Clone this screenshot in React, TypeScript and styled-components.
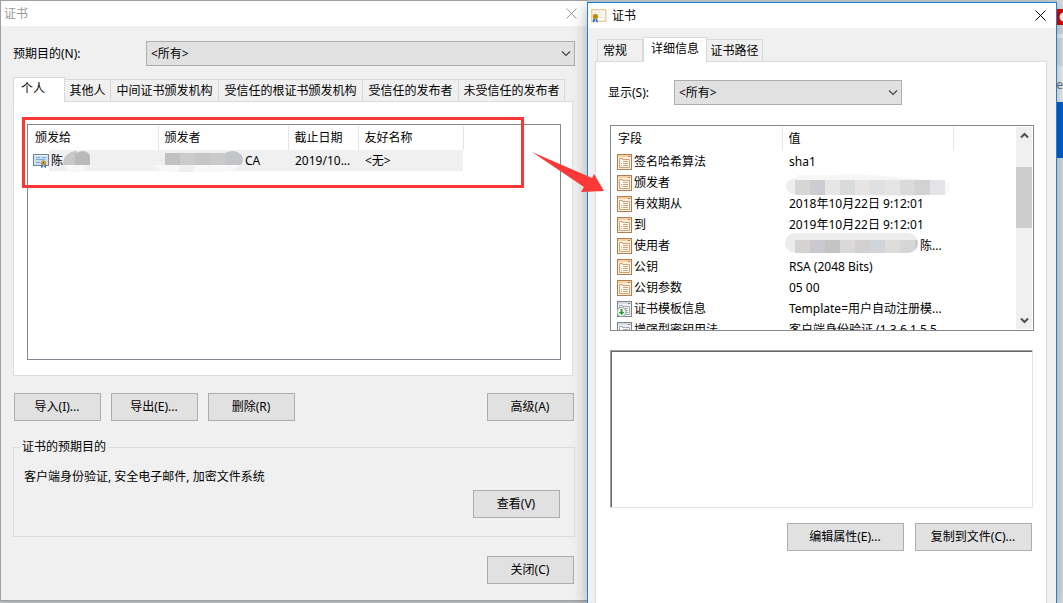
import React from "react";
import styled, { createGlobalStyle, css } from "styled-components";

const Global = createGlobalStyle`
  *, *::before, *::after { box-sizing: border-box; }
  body { margin: 0; background: #c9cbcc; }
  body, button, select, textarea { font: 12px/16px "Noto Sans", "Noto Sans CJK SC", sans-serif; color: #000; }
  svg { display: block; flex: none; }
`;

const Desktop = styled.div`
  display: grid;
  grid-template-columns: minmax(0, 587fr) minmax(0, 470fr) 6px;
  min-height: 100vh;
  overflow: hidden;
`;

const Win = styled.section<{ $active?: boolean }>`
  display: flex;
  flex-direction: column;
  background: #f0f0f0;
  ${(p) =>
    p.$active
      ? css`
          z-index: 1;
          margin-top: 2px;
          border: 1px solid #1883d7;
          border-bottom: 0;
          box-shadow: 0 4px 14px rgba(0, 0, 0, 0.3);
        `
      : css`
          position: relative;
          margin-bottom: 2px;
          border: 1px solid #a0a0a0;
          border-right: 0;
          box-shadow: 0 0 6px rgba(0, 0, 0, 0.3);
        `}
`;

const TitleBar = styled.header<{ $active?: boolean }>`
  display: flex;
  align-items: center;
  gap: 5px;
  height: 25px;
  padding: 0 10px 0 3px;
  background: #fff;
  color: ${(p) => (p.$active ? "#000" : "#999")};
`;

const Title = styled.h1`
  flex: 1;
  margin: 0;
  font-size: 12px;
  font-weight: 400;
`;

const CloseButton = styled.button`
  display: flex;
  padding: 0;
  border: 0;
  background: none;
  color: inherit;
`;

const Field = styled.div<{ $inset?: boolean }>`
  display: grid;
  grid-template-columns: ${(p) => (p.$inset ? "66px minmax(0, 228px)" : "133px minmax(0, 1fr)")};
  align-items: center;
`;

const SelectBox = styled.div`
  position: relative;
  display: flex;
`;

const Select = styled.select`
  appearance: none;
  width: 100%;
  height: 25px;
  padding: 0 24px 0 4px;
  border: 1px solid #adadad;
  border-radius: 0;
  background: #e1e1e1;
`;

const SelectArrow = styled.svg`
  position: absolute;
  right: 4px;
  top: 10px;
  pointer-events: none;
`;

const Tabs = styled.div`
  display: flex;
  align-items: flex-end;
`;

const Tab = styled.button<{ $on?: boolean; $first?: boolean; $w: number }>`
  width: ${(p) => p.$w}px;
  height: ${(p) => (p.$on ? 25 : 22)}px;
  padding: 0;
  border: 1px solid #d9d9d9;
  border-bottom: 0;
  border-left-width: ${(p) => (p.$first ? 1 : 0)}px;
  background: #f0f0f0;
  white-space: nowrap;
  ${(p) =>
    p.$on &&
    css`
      z-index: 1;
      margin-bottom: -1px;
      padding-bottom: 3px;
      border-left-width: 1px;
      background: #fff;
    `}
  ${(p) =>
    p.$first &&
    css`
      padding-left: ${p.$on ? 7 : 5}px;
      text-align: left;
    `}
`;

const Panel = styled.div`
  background: #fff;
  border: 1px solid #dcdcdc;
`;

const Button = styled.button<{ $wide?: boolean }>`
  width: ${(p) => (p.$wide ? 117 : 87)}px;
  height: 28px;
  padding: 0 1px 0 0;
  border: 1px solid #adadad;
  background: #e1e1e1;
`;

const ListFrame = styled.div`
  display: flex;
  background: #fff;
  border: 1px solid #828790;
  padding: 1px;
  overflow: hidden;
`;

const Table = styled.table`
  table-layout: fixed;
  border-collapse: collapse;
  flex: 1;
  align-self: flex-start;
  width: 100%;
  th, td { padding: 0 0 0 6px; text-align: left; font-weight: 400; white-space: nowrap; }
  td:first-child { padding-left: 5px; }
  thead th { height: 24px; border-right: 1px solid #e5e5e5; }
  thead th:last-child { border-right: 0; }
  td { height: 21px; }
`;

/* ---- personal certificates window ---- */

const StoreBody = styled.div`
  flex: 1;
  display: flex;
  flex-direction: column;
  padding: 15px 12px 16px;
`;

const StoreTabs = styled.div`
  margin-top: 11px;
`;

const StorePanel = styled(Panel)`
  position: relative;
  margin-right: 2px;
  padding: 22px 11px 15px 13px;
`;

const StoreList = styled(ListFrame)`
  height: 236px;
`;

const StoreTable = styled(Table)`
  td:not(:first-child):not(:last-child) { background: #f0f0f0; }
  td:nth-child(3), td:nth-child(4) { padding-left: 7px; }
`;

const IssuedTo = styled.div`
  display: flex;
  align-items: center;
  margin-left: -1px;
`;

const CertName = styled.span`
  flex: 1;
  display: flex;
  align-items: center;
  height: 21px;
  padding-left: 2px;
  background: #f0f0f0;
`;

const Highlight = styled.div`
  position: absolute;
  left: 8px;
  right: 48px;
  top: 15px;
  height: 71px;
  border: 3px solid #fb3838;
  pointer-events: none;
`;

const Arrow = styled.svg`
  position: absolute;
  z-index: 2;
  left: 100%;
  top: 150px;
  margin-left: -58px;
  pointer-events: none;
`;

const ActionRow = styled.div`
  display: flex;
  gap: 10px;
  margin: 17px 1px 0;
`;

const Spacer = styled.span`
  flex: 1;
`;

const Purposes = styled.fieldset`
  display: flex;
  flex-direction: column;
  min-width: 0;
  margin: 18px 0 19px;
  height: 98px;
  padding: 14px 14px 18px 10px;
  border: 1px solid #dcdcdc;
  legend { margin-left: -4px; padding: 0 2px; height: 16px; }
  p { margin: 0; }
`;

const PushRight = styled.div`
  display: flex;
  justify-content: flex-end;
  margin-top: 5px;
`;

const CloseRow = styled.div`
  display: flex;
  justify-content: flex-end;
  margin-right: 1px;
`;

/* ---- certificate details window ---- */

const DetailBody = styled.div`
  flex: 1;
  display: flex;
  flex-direction: column;
  padding: 9px 9px 0 7px;
`;

const DetailTabs = styled.div`
  padding-left: 2px;
`;

const DetailPanel = styled(Panel)`
  flex: 1;
  padding: 18px 12px 0 14px;
  border-bottom: 0;
`;

const FieldInset = styled.div`
  margin-left: -2px;
`;

const DetailList = styled(ListFrame)`
  height: 206px;
  margin-top: 20px;
`;

const DetailTable = styled(Table)`
  td:nth-child(2) { padding-left: 7px; }
`;

const FieldName = styled.div`
  display: flex;
  align-items: center;
  gap: 2px;
`;

const ScrollBar = styled.div`
  display: flex;
  flex: none;
  flex-direction: column;
  align-items: center;
  width: 16px;
  background: #f0f0f0;
`;

const ScrollButton = styled.button`
  display: flex;
  justify-content: center;
  align-items: center;
  width: 16px;
  height: 17px;
  padding: 0;
  border: 0;
  background: none;
`;

const ScrollTrack = styled.div`
  flex: 1;
  width: 100%;
  padding-top: 23px;
`;

const Thumb = styled.div`
  height: 61px;
  background: #cdcdcd;
`;

const ValueBox = styled.textarea`
  display: block;
  width: calc(100% - 1px);
  height: 158px;
  margin-top: 19px;
  resize: none;
  border: 1px solid #e3e3e3;
  border-top-color: #a0a0a0;
  border-left-color: #a0a0a0;
  border-radius: 0;
  box-shadow: inset 1px 1px #696969;
  outline: 0;
`;

const DetailActions = styled.div`
  display: flex;
  justify-content: flex-end;
  gap: 11px;
  margin: 15px 2px 0 0;
`;

const Masked = styled.div`
  display: flex;
  align-items: center;
  height: 21px;
`;

const MaskSvg = styled.svg`
  overflow: visible;
`;

/* ---- sliver of the browser behind ---- */

const Behind = styled.aside`
  display: flex;
  flex-direction: column;
  overflow: hidden;
  background: #dcdfe0;
`;

const Band = styled.div<{ $h: number; $c: string }>`
  flex: none;
  height: ${(p) => p.$h}px;
  padding-top: 2px;
  background: ${(p) => p.$c};
`;

const PageText = styled(Band)`
  display: flex;
  justify-content: flex-end;
  padding-top: 0;
  color: #6f7478;
`;

function CloseGlyph() {
  return (
    <svg width="11" height="11" viewBox="0 0 11 11" aria-hidden="true">
      <path d="M.5.5l10 10M10.5.5l-10 10" stroke="currentColor" fill="none" />
    </svg>
  );
}

function Combo({ id }: { id: string }) {
  return (
    <SelectBox>
      <Select id={id}>
        <option>&lt;所有&gt;</option>
      </Select>
      <SelectArrow width="10" height="6" viewBox="0 0 10 6" aria-hidden="true">
        <path d="M1 .5l4 4 4-4" stroke="#444" strokeWidth="1.2" fill="none" />
      </SelectArrow>
    </SelectBox>
  );
}

function TabStrip({ items, active }: { items: [string, number][]; active: number }) {
  return (
    <Tabs role="tablist">
      {items.map(([label, w], i) => (
        <Tab key={label} role="tab" aria-selected={i === active} $on={i === active} $first={i === 0} $w={w}>
          {label}
        </Tab>
      ))}
    </Tabs>
  );
}

function CertRowIcon() {
  return (
    <svg width="16" height="14" viewBox="0 0 16 14" aria-hidden="true">
      <rect x=".5" y=".5" width="15" height="11" fill="#c9e0f8" stroke="#6f8596" />
      <path d="M1.500 1.500h13" stroke="#eaf4fd" />
      <path d="M3 3.500h4M9 3.500h4M3 5.500h9M3 8.500h4" stroke="#7fa8dc" />
      <path d="M8 10.500v3.500l2-1V10zM13 10.500v3.500l-2-1V10z" fill="#2f74dc" />
      <circle cx="10.500" cy="9" r="2.700" fill="#c2a050" />
      <circle cx="10.500" cy="9" r="1" fill="#8a6a1c" />
    </svg>
  );
}

function TitleIcon() {
  return (
    <svg width="16" height="14" viewBox="0 0 16 14" aria-hidden="true">
      <rect x=".75" y=".75" width="14" height="11.500" fill="#fffdf8" stroke="#e8cfa4" strokeWidth="1.500" />
      <path d="M3 3.500h3M7 3.500h5M8 5.500h5M8 8.500h5" stroke="#e2e6ea" />
      <path d="M2.500 9l-1 4.500 2.200-.8L4.500 9zM6 9l1 4.500-2-.8L4.500 9z" fill="#2f6fe0" />
      <circle cx="4.500" cy="7.500" r="2.800" fill="#cc9a1a" />
      <circle cx="4.500" cy="7.500" r="1.200" fill="#a87c10" />
    </svg>
  );
}

function FieldIcon({ ext, critical }: { ext?: boolean; critical?: boolean }) {
  const edge = ext ? "#7d868e" : "#b07d55";
  const soft = ext ? "#eef1f4" : "#feeeda";
  const line = ext ? "#a3abb3" : "#cda279";
  return (
    <svg width="15" height="16" viewBox="0 0 15 16" aria-hidden="true">
      <rect x=".5" y=".5" width="14" height="15" fill={soft} stroke={edge} />
      <path d="M1 2h13" stroke={ext ? "#d5dbe0" : "#f9cf9d"} strokeWidth="2" />
      <path d="M11 2.500h2" stroke={edge} />
      <path d="M2.500 13.500v-9h3v1h7v8z" fill="#fffaf3" stroke={line} />
      <path d="M6 7.500h5M4 9.500h1M6 9.500h5M4 11.500h1M6 11.500h5" stroke={line} />
      {critical && (
        <>
          <circle cx="4.500" cy="11" r="4.500" fill="#fff" stroke="#8c939a" />
          <path d="M3.500 8h2v3H7.500l-3 3-3-3h2z" fill="#27a022" />
        </>
      )}
    </svg>
  );
}

function Blocks({ colors, y, h }: { colors: string[]; y: number; h: number }) {
  return (
    <>
      {colors.map((c, i) => (
        <rect key={i} x={6 + i * 15} y={y} width="15" height={h} fill={c} />
      ))}
    </>
  );
}

const fields: { name: string; value: React.ReactNode; ext?: boolean; critical?: boolean }[] = [
  { name: "签名哈希算法", value: "sha1" },
  {
    name: "颁发者",
    value: (
      <Masked>
        <MaskSvg width="160" height="21" viewBox="0 0 160 21" aria-hidden="true">
          <path d="M8 3h30l30-1 40 3 30 3v12l-10 5H80l-30-3H8z" fill="#f6f6f5" />
          <path d="M8 6v17q-11-2-11-9t11-8z" fill="#eeeeed" />
          <Blocks
            y={8}
            h={15}
            colors={["#d6d6d6", "#cdcdd1", "#e6e6e6", "#d9dada", "#e6e5e4", "#dfe0e2", "#e6e5e4", "#d9dadc", "#d3d2d1", "#e4e4e8"]}
          />
          <path d="M156 9q5 2 5 6t-5 7z" fill="#f8f8f8" />
        </MaskSvg>
      </Masked>
    ),
  },
  { name: "有效期从", value: "2018年10月22日 9:12:01" },
  { name: "到", value: "2019年10月22日 9:12:01" },
  {
    name: "使用者",
    value: (
      <Masked>
        <MaskSvg width="131" height="21" viewBox="0 0 131 21" aria-hidden="true">
          <clipPath id="owner-mask">
            <rect x="-4" y="-2" width="133" height="20" rx="10" />
          </clipPath>
          <g clipPath="url(#owner-mask)">
            <rect x="-4" y="-2" width="133" height="20" fill="#ececed" />
            <Blocks
              y={5}
              h={13}
              colors={["#d4d3d2", "#cbc9cf", "#c4c4c4", "#dad9d7", "#d2d0d1", "#d1d5da", "#dedddb", "#d6d6d6", "#c9c9cb"]}
            />
          </g>
        </MaskSvg>
        陈...
      </Masked>
    ),
  },
  { name: "公钥", value: "RSA (2048 Bits)" },
  { name: "公钥参数", value: "05 00" },
  { name: "证书模板信息", value: "Template=用户自动注册模...", ext: true, critical: true },
  { name: "增强型密钥用法", value: "客户端身份验证 (1.3.6.1.5.5....", ext: true },
];

export default function App() {
  return (
    <>
      <Global />
      <Desktop>
        <Win>
          <TitleBar>
            <Title>证书</Title>
            <CloseButton aria-label="关闭">
              <CloseGlyph />
            </CloseButton>
          </TitleBar>
          <StoreBody>
            <Field>
              <label htmlFor="purpose">预期目的(N):</label>
              <Combo id="purpose" />
            </Field>
            <StoreTabs>
              <TabStrip
                active={0}
                items={[
                  ["个人", 52],
                  ["其他人", 46],
                  ["中间证书颁发机构", 108],
                  ["受信任的根证书颁发机构", 144],
                  ["受信任的发布者", 96],
                  ["未受信任的发布者", 106],
                ]}
              />
            </StoreTabs>
            <StorePanel>
              <StoreList>
                <StoreTable>
                  <colgroup>
                    <col style={{ width: 129 }} />
                    <col style={{ width: 130 }} />
                    <col style={{ width: 70 }} />
                    <col style={{ width: 105 }} />
                    <col />
                  </colgroup>
                  <thead>
                    <tr>
                      <th>颁发给</th>
                      <th>颁发者</th>
                      <th>截止日期</th>
                      <th>友好名称</th>
                      <th />
                    </tr>
                  </thead>
                  <tbody>
                    <tr>
                      <td>
                        <IssuedTo>
                          <CertRowIcon />
                          <CertName>
                            陈
                            <MaskSvg width="28" height="21" viewBox="0 0 28 21" aria-hidden="true">
                              <circle cx="12" cy="12" r="11" fill="#f8f8f8" />
                              <path d="M0 15Q0 3 12 1h2v14z" fill="#c8c8c8" />
                              <path d="M12 4q4-3 8-3 7 1 7 6v8H12z" fill="#bababa" />
                            </MaskSvg>
                          </CertName>
                        </IssuedTo>
                      </td>
                      <td>
                        <Masked>
                          <MaskSvg width="81" height="21" viewBox="0 0 81 21" aria-hidden="true">
                            <path d="M-10 15h86q-6 7-20 7H12q-18 0-22-7z" fill="#f8f8f8" />
                            <path d="M15 15h15v7H15z" fill="#efefef" />
                            <path d="M1 3h15v12H1z" fill="#c2c0c0" />
                            <path d="M16 3h15v12H16z" fill="#cbcbcd" />
                            <path d="M31 3h15v12H31z" fill="#c6c6c6" />
                            <path d="M46 3h15v12H46z" fill="#cccac9" />
                            <path d="M61 3q4-2 9-2 9 2 9 10l-2 4H61z" fill="#c2c4c8" />
                          </MaskSvg>
                          CA
                        </Masked>
                      </td>
                      <td>2019/10...</td>
                      <td>&lt;无&gt;</td>
                      <td />
                    </tr>
                  </tbody>
                </StoreTable>
              </StoreList>
              <Highlight />
            </StorePanel>
            <ActionRow>
              <Button>导入(I)...</Button>
              <Button>导出(E)...</Button>
              <Button>删除(R)</Button>
              <Spacer />
              <Button>高级(A)</Button>
            </ActionRow>
            <Purposes>
              <legend>证书的预期目的</legend>
              <p>客户端身份验证, 安全电子邮件, 加密文件系统</p>
              <PushRight>
                <Button>查看(V)</Button>
              </PushRight>
            </Purposes>
            <CloseRow>
              <Button>关闭(C)</Button>
            </CloseRow>
          </StoreBody>
          <Arrow width="76" height="42" viewBox="0 0 76 42" aria-hidden="true">
            <path d="M3 1L63 27l2-4 10 17-23 1 3-5z" fill="#fb3838" />
          </Arrow>
        </Win>

        <Win $active>
          <TitleBar $active>
            <TitleIcon />
            <Title>证书</Title>
            <CloseButton aria-label="关闭">
              <CloseGlyph />
            </CloseButton>
          </TitleBar>
          <DetailBody>
            <DetailTabs>
              <TabStrip
                active={1}
                items={[
                  ["常规", 46],
                  ["详细信息", 64],
                  ["证书路径", 56],
                ]}
              />
            </DetailTabs>
            <DetailPanel>
              <FieldInset>
                <Field $inset>
                  <label htmlFor="show">显示(S):</label>
                  <Combo id="show" />
                </Field>
              </FieldInset>
              <DetailList>
                <DetailTable>
                  <colgroup>
                    <col style={{ width: 170 }} />
                    <col style={{ width: 171 }} />
                    <col />
                  </colgroup>
                  <thead>
                    <tr>
                      <th>字段</th>
                      <th>值</th>
                      <th />
                    </tr>
                  </thead>
                  <tbody>
                    {fields.map((f) => (
                      <tr key={f.name}>
                        <td>
                          <FieldName>
                            <FieldIcon ext={f.ext} critical={f.critical} />
                            {f.name}
                          </FieldName>
                        </td>
                        <td>{f.value}</td>
                        <td />
                      </tr>
                    ))}
                  </tbody>
                </DetailTable>
                <ScrollBar>
                  <ScrollButton aria-label="向上滚动">
                    <svg width="9" height="7" viewBox="0 0 9 7">
                      <path d="M1 5.500L4.500 2 8 5.500" stroke="#505050" strokeWidth="2" fill="none" />
                    </svg>
                  </ScrollButton>
                  <ScrollTrack>
                    <Thumb />
                  </ScrollTrack>
                  <ScrollButton aria-label="向下滚动">
                    <svg width="9" height="7" viewBox="0 0 9 7">
                      <path d="M1 1.500L4.500 5 8 1.500" stroke="#505050" strokeWidth="2" fill="none" />
                    </svg>
                  </ScrollButton>
                </ScrollBar>
              </DetailList>
              <ValueBox aria-label="值" readOnly />
              <DetailActions>
                <Button $wide>编辑属性(E)...</Button>
                <Button $wide>复制到文件(C)...</Button>
              </DetailActions>
            </DetailPanel>
          </DetailBody>
        </Win>

        <Behind>
          <Band $h={9} $c="#d8dbdd" />
          <Band $h={16} $c="#e00000">
            <svg width="6" height="12" viewBox="0 0 6 12" aria-hidden="true">
              <circle cx="7" cy="6" r="4.500" fill="#fff" />
            </svg>
          </Band>
          <Band $h={9} $c="#d8dbdd" />
          <Band $h={4} $c="#f2f2f2" />
          <Band $h={28} $c="#dde1e3" />
          <Band $h={11} $c="#f0f0f0" />
          <PageText $h={25} $c="#f0f0f0">
            e
          </PageText>
          <Band $h={56} $c="#0060d0" />
        </Behind>
      </Desktop>
    </>
  );
}
